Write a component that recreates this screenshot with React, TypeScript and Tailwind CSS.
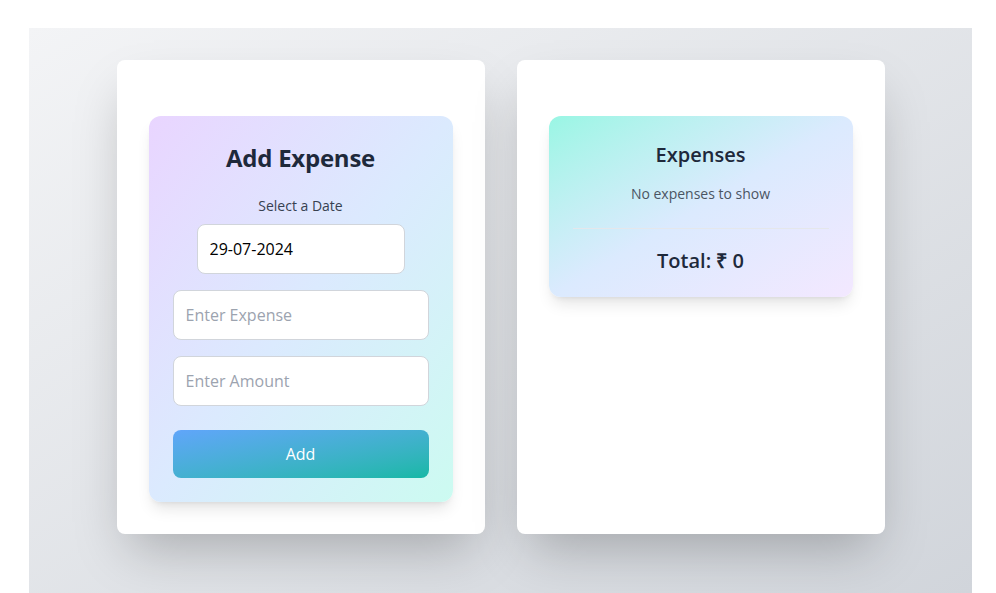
import React from 'react';

export default function App() {
  return (
    <div className="bg-white h-[593px] overflow-hidden font-['Open_Sans',sans-serif]">
      <div className="ml-[29px] mt-[28px] w-[943px] h-[565px] bg-linear-to-br from-[#f3f4f6] to-[#d1d5db] flex justify-center items-start gap-8 pt-8">
        {/* left: add expense */}
        <div className="w-[368px] h-[474px] bg-white rounded-lg shadow-2xl px-8 pt-14 pb-8">
          <div className="rounded-xl shadow-lg bg-linear-to-br from-[#e9d5ff] via-[#dbeafe] to-[#ccfbf1] p-6 flex flex-col items-center">
            <h1 className="pt-0.5 text-2xl font-bold text-[#1e293b] leading-8 tracking-[-0.01em]">Add Expense</h1>
            <label className="mt-[22px] text-sm font-medium text-[#374151] leading-5">Select a Date</label>
            <input
              type="text"
              defaultValue="29-07-2024"
              className="mt-2 w-52 h-[50px] px-3 bg-white border border-[#d1d5db] rounded-lg text-base text-black outline-none"
            />
            <input
              type="text"
              placeholder="Enter Expense"
              className="mt-4 w-full h-[50px] px-3 bg-white border border-[#d1d5db] rounded-lg text-base placeholder-[#9ca3af] outline-none"
            />
            <input
              type="text"
              placeholder="Enter Amount"
              className="mt-4 w-full h-[50px] px-3 bg-white border border-[#d1d5db] rounded-lg text-base placeholder-[#9ca3af] outline-none"
            />
            <button className="mt-6 w-full h-12 rounded-lg bg-linear-to-br from-[#60a5fa] to-[#14b8a6] text-white text-base">
              Add
            </button>
          </div>
        </div>

        {/* right: expense list */}
        <div className="w-[368px] h-[474px] bg-white rounded-lg shadow-2xl px-8 pt-14 pb-8">
          <div className="rounded-xl shadow-lg bg-linear-to-br from-[#99f6e4] via-[#dbeafe] to-[#f3e8ff] px-6 pt-6 pb-[22px] text-center">
            <h2 className="pt-px text-xl font-semibold text-[#1e293b] leading-7">Expenses</h2>
            <p className="mt-[15px] text-sm text-[#4b5563] leading-5">No expenses to show</p>
            <div className="mt-6 border-t border-[#e5e7eb] pt-[18px]">
              <p className="text-xl font-semibold text-[#1e293b] leading-7">Total: ₹ 0</p>
            </div>
          </div>
        </div>
      </div>
    </div>
  );
}
